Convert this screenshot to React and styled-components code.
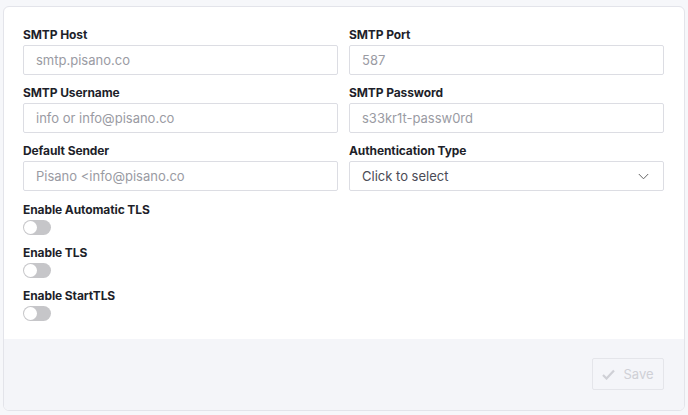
import React from "react";
import styled, { createGlobalStyle } from "styled-components";

const Global = createGlobalStyle`
  html, body { margin: 0; padding: 0; background: #f6f7fa; }
  body { font-family: "Inter", "Noto Sans", sans-serif; }
  * { box-sizing: border-box; }
`;

const Page = styled.div`
  padding: 6px 3px 4px 3px;
`;

const Card = styled.div`
  background: #fff;
  border: 1px solid #e3e4ea;
  border-radius: 6px;
  overflow: hidden;
  height: 405px;
  display: flex;
  flex-direction: column;
`;

const Body = styled.div`
  padding: 20px 20px 0 19px;
  flex: 1;
`;

const Grid = styled.div`
  display: grid;
  grid-template-columns: 1fr 1fr;
  column-gap: 11px;
  row-gap: 10px;
`;

const Field = styled.div`
  display: flex;
  flex-direction: column;
`;

const Label = styled.label`
  font-size: 12px;
  font-weight: 700;
  color: #1e1f2a;
  line-height: 16px;
  margin-bottom: 2px;
  letter-spacing: -0.1px;
`;

const Input = styled.div`
  height: 30px;
  border: 1px solid #dcdde3;
  border-radius: 2px;
  padding: 0 14px 0 12px;
  display: flex;
  align-items: center;
  font-size: 13px;
  color: ${(p) => (p.$dark ? "#4a4b55" : "#9a9ba3")};
  justify-content: space-between;
`;

const Toggles = styled.div`
  margin-top: 11px;
  display: flex;
  flex-direction: column;
  gap: 10px;
`;

const ToggleRow = styled.div`
  display: flex;
  flex-direction: column;
  align-items: flex-start;
`;

const Switch = styled.div`
  width: 28px;
  height: 15px;
  border-radius: 8px;
  background: #c6c6c9;
  position: relative;
  &::after {
    content: "";
    position: absolute;
    left: 1px;
    top: 1px;
    width: 13px;
    height: 13px;
    border-radius: 50%;
    background: #fff;
  }
`;

const Footer = styled.div`
  background: #f4f5f9;
  height: 71px;
  display: flex;
  justify-content: flex-end;
  align-items: flex-start;
  padding: 19px 20px 0 0;
`;

const SaveButton = styled.button`
  width: 72px;
  height: 32px;
  border: 1px solid #e4e5ea;
  border-radius: 2px;
  background: transparent;
  color: #cfd0d6;
  font-family: inherit;
  font-size: 13px;
  display: flex;
  align-items: center;
  justify-content: center;
  gap: 8px;
  padding: 0;
`;

const fields = [
  ["SMTP Host", "smtp.pisano.co"],
  ["SMTP Port", "587"],
  ["SMTP Username", "info or info@pisano.co"],
  ["SMTP Password", "s33kr1t-passw0rd"],
  ["Default Sender", "Pisano <info@pisano.co"],
];

export default function App() {
  return (
    <>
      <Global />
      <Page>
        <Card>
          <Body>
            <Grid>
              {fields.map(([l, v]) => (
                <Field key={l}>
                  <Label>{l}</Label>
                  <Input>{v}</Input>
                </Field>
              ))}
              <Field>
                <Label>Authentication Type</Label>
                <Input $dark>
                  <span>Click to select</span>
                  <svg width="11" height="7" viewBox="0 0 11 7" fill="none">
                    <path d="M0.8 1L5.5 5.8L10.2 1" stroke="#666" strokeWidth="1" />
                  </svg>
                </Input>
              </Field>
            </Grid>
            <Toggles>
              {["Enable Automatic TLS", "Enable TLS", "Enable StartTLS"].map((t) => (
                <ToggleRow key={t}>
                  <Label>{t}</Label>
                  <Switch />
                </ToggleRow>
              ))}
            </Toggles>
          </Body>
          <Footer>
            <SaveButton>
              <svg width="13" height="11" viewBox="0 0 13 11">
                <path d="M1 6L4.5 9.5L12 1.5" stroke="#cfd0d6" strokeWidth="2.2" fill="none" />
              </svg>
              Save
            </SaveButton>
          </Footer>
        </Card>
      </Page>
    </>
  );
}
